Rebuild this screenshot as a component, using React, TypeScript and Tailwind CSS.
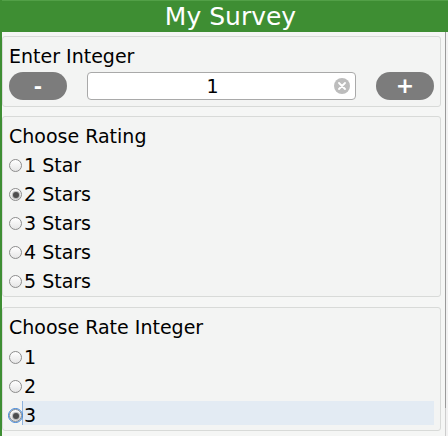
import React from 'react';

const ratings = ['1 Star', '2 Stars', '3 Stars', '4 Stars', '5 Stars'];
const rateInts = ['1', '2', '3'];

const Radio: React.FC<{ checked?: boolean; focused?: boolean }> = ({ checked, focused }) => (
  <span
    className={`relative flex items-center justify-center w-[13px] h-[13px] rounded-full border border-[#8c8c8c] bg-gradient-to-b from-white to-[#e6e6e6] shrink-0 ${
      focused ? 'outline outline-[1.5px] outline-[#3b82d6] outline-offset-[0px]' : ''
    }`}
  >
    {checked && <span className="w-[6px] h-[6px] rounded-full bg-[#4d4d4d] shadow-[0_0_1px_1px_rgba(120,120,120,0.5)]" />}
  </span>
);

const Option: React.FC<{ label: string; checked?: boolean; focused?: boolean }> = ({ label, checked, focused }) => (
  <div className="flex items-center h-[29px]">
    <Radio checked={checked} focused={focused} />
    <div
      className={`flex-1 self-start h-[24px] leading-[29px] pl-[1px] ${
        focused ? 'bg-[#e3ebf3] border-l border-[#8fb3dd]' : 'border-l border-transparent'
      }`}
    >
      {label}
    </div>
  </div>
);

export default function App() {
  return (
    <div className="w-[448px] h-[436px] overflow-hidden flex flex-col border-l-2 border-[#3e8e33] bg-[#f5f6f5] text-black font-['DejaVu_Sans',sans-serif]">
      {/* header */}
      <div className="h-[32px] shrink-0 bg-[#3e8e33] border-t border-[#52a047] flex items-center justify-center pl-[11px] text-white text-[25px] leading-[31px]">
        My Survey
      </div>

      <div className="flex flex-1 min-h-0">
        <div className="flex-1 pt-[4px] pr-[4px] flex flex-col text-[19px] leading-[24px]">
          {/* integer stepper */}
          <div className="border border-[#d8dad8] rounded-[3px] bg-[#f3f4f3] pl-[6px] pr-[6px] pt-[7px] pb-[6px]">
            <div className="h-[24px]">Enter Integer</div>
            <div className="mt-[4px] flex items-center gap-[20px] h-[28px]">
              <button className="w-[58px] h-[28px] rounded-full bg-[#7c7c7c] text-white font-bold text-[20px] leading-[28px] flex items-center justify-center">
                -
              </button>
              <div className="relative flex-1 h-[28px] bg-white border border-[#a9a9a9] rounded-[4px] flex items-center justify-center pr-[18px]">
                <span className="leading-[26px]">1</span>
                <span className="absolute right-[5px] top-[5px] w-[16px] h-[16px] rounded-full bg-[#bdbdbd] flex items-center justify-center">
                  <svg width="8" height="8" viewBox="0 0 8 8">
                    <path d="M1 1 L7 7 M7 1 L1 7" stroke="white" strokeWidth="1.8" strokeLinecap="round" />
                  </svg>
                </span>
              </div>
              <button className="w-[58px] h-[28px] rounded-full bg-[#7c7c7c] text-white font-bold text-[22px] leading-[28px] flex items-center justify-center">
                +
              </button>
            </div>
          </div>

          {/* rating */}
          <div className="mt-[9px] border border-[#d8dad8] rounded-[3px] bg-[#f3f4f3] pl-[6px] pr-[6px] pt-[7px]">
            <div className="h-[24px]">Choose Rating</div>
            <div className="mt-[3px]">
              {ratings.map((r) => (
                <Option key={r} label={r} checked={r === '2 Stars'} />
              ))}
            </div>
          </div>

          {/* rate integer */}
          <div className="mt-[10px] border border-[#d8dad8] rounded-[3px] bg-[#f3f4f3] pl-[6px] pr-[6px] pt-[7px]">
            <div className="h-[24px]">Choose Rate Integer</div>
            <div className="mt-[4px]">
              {rateInts.map((r) => (
                <Option key={r} label={r} checked={r === '3'} focused={r === '3'} />
              ))}
            </div>
          </div>
        </div>

        {/* scrollbar edge */}
        <div className="w-[3px] shrink-0 flex flex-col bg-[#f2f2f2]">
          <div className="h-[376px] border-l border-[#9a9a9a]" />
          <div className="flex-1 border-l border-[#cdcdcd]" />
        </div>
      </div>
    </div>
  );
}
